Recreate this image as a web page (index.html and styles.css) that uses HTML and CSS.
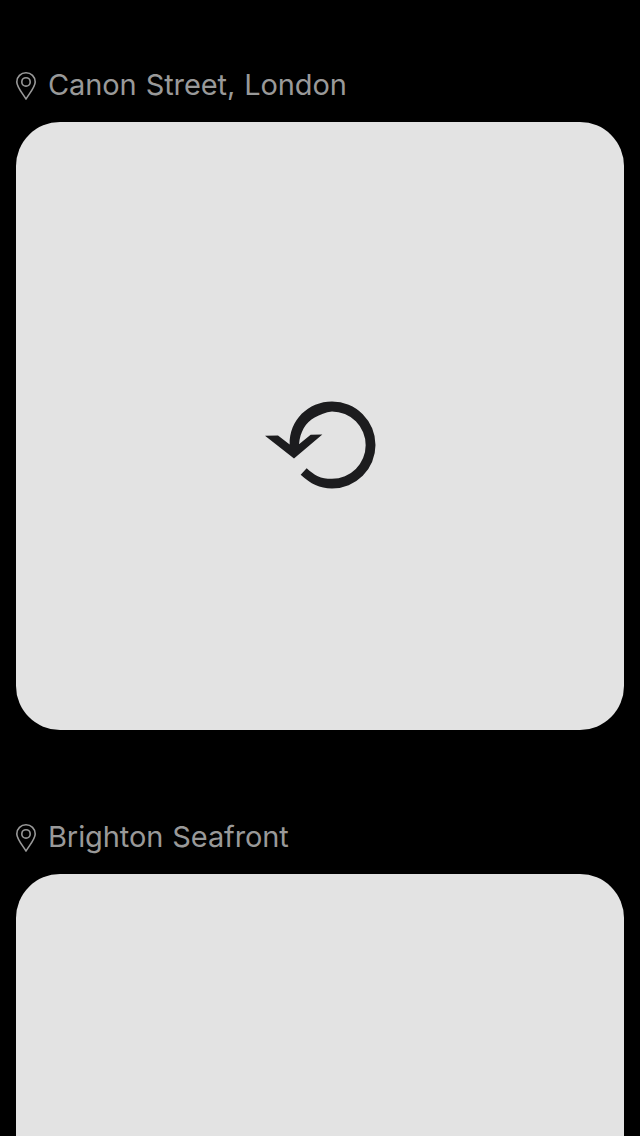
FILE: index.html
```html
<!DOCTYPE html>
<html lang="en">
<head>
<meta charset="utf-8">
<title>Places</title>
<link rel="stylesheet" href="styles.css">
</head>
<body>
<main class="feed">
  <section class="place">
    <header class="place-header">
      <svg class="pin" viewBox="0 0 22 30" fill="none" stroke="currentColor" stroke-width="1.6" stroke-linejoin="round"><path d="M11 28C8 22.900 1.800 15.900 1.800 10.900a9.200 9.200 0 0 1 18.400 0C20.200 15.900 14 22.900 11 28Z"/><circle cx="11" cy="10.900" r="4.200"/></svg>
      <h2 class="place-name">Canon Street, London</h2>
    </header>
    <div class="card">
      <svg class="reload" viewBox="27 31.5 336 267" fill="currentColor"><path d="M30 136 69 135 104 162C102 89 160 33 231 33A130.500 130.500 0 0 1 231 294C193 294 168 281 137 253L155 233C178 254 196 265 231 265A101 101 0 0 0 231 63C212 65 195 73 179 81C152 95 135 125 132 161L167 133 202 132 117 204Z"/></svg>
    </div>
  </section>
  <section class="place">
    <header class="place-header">
      <svg class="pin" viewBox="0 0 22 30" fill="none" stroke="currentColor" stroke-width="1.6" stroke-linejoin="round"><path d="M11 28C8 22.900 1.800 15.900 1.800 10.900a9.200 9.200 0 0 1 18.400 0C20.200 15.900 14 22.900 11 28Z"/><circle cx="11" cy="10.900" r="4.200"/></svg>
      <h2 class="place-name">Brighton Seafront</h2>
    </header>
    <div class="card"></div>
  </section>
</main>
</body>
</html>
```
FILE: styles.css
```css
* { box-sizing: border-box; }
html, body { height: 100%; margin: 0; background: #000; overflow: hidden; }
.feed {
  display: flex;
  flex-direction: column;
  gap: 84px;
  height: 1136px;
  padding: 62px 16px 0;
  overflow: hidden;
}
.place { flex: none; }
.place-header {
  display: flex;
  align-items: center;
  height: 46px;
  margin-bottom: 14px;
  color: #999;
}
.pin { flex: none; width: 22px; height: 30px; margin: 2px 0 0 -1px; }
.place-name {
  margin: 0 0 0 11px;
  font: 400 29px/46px Inter, "Liberation Sans", sans-serif;
  letter-spacing: -0.1px;
  word-spacing: 1px;
  white-space: nowrap;
}
.card {
  display: flex;
  align-items: center;
  justify-content: center;
  height: 608px;
  padding-top: 38px;
  border-radius: 44px;
  background: #e3e3e3;
  color: #1c1c1e;
}
.reload { width: 112px; height: 89px; }
```
